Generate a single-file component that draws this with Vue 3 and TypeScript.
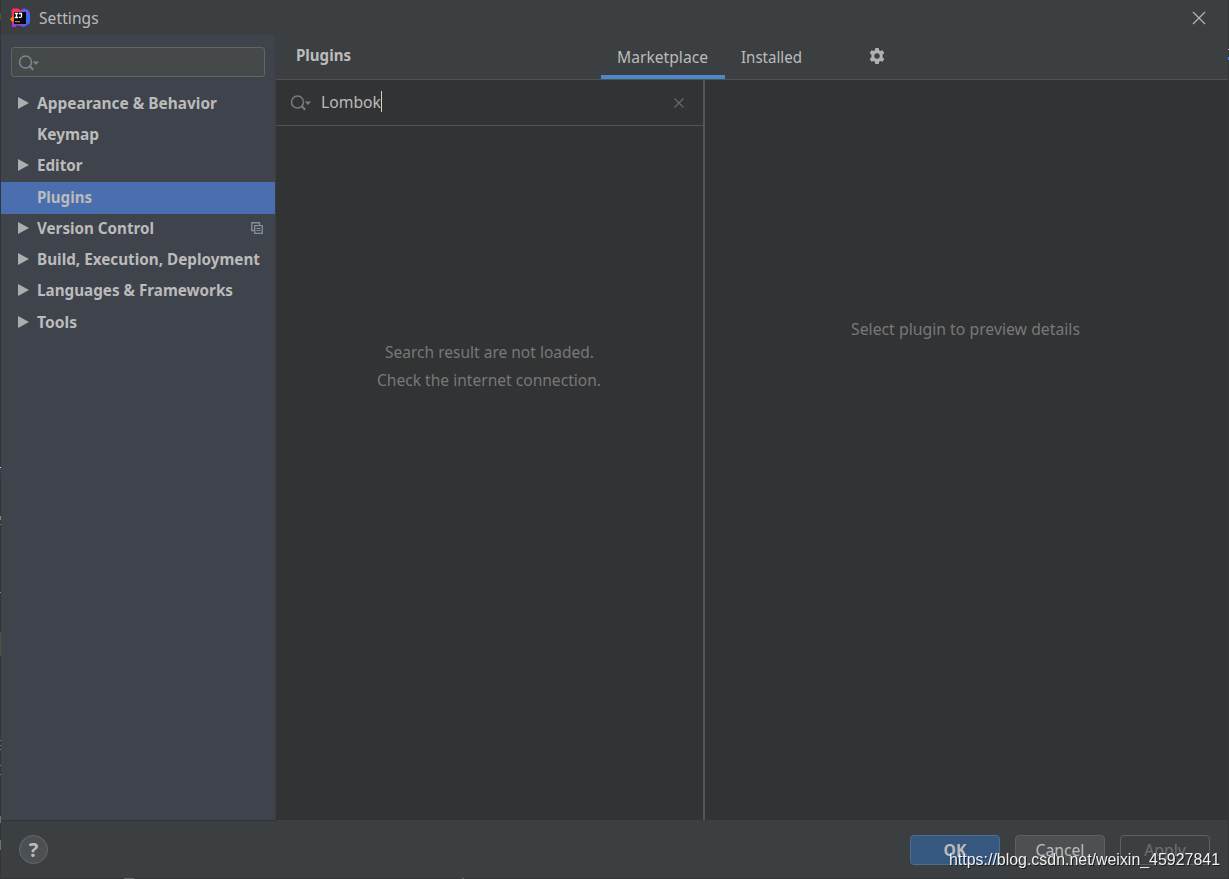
<script setup lang="ts">
interface Category {
  label: string
  expandable: boolean
  width: number
  selected?: boolean
  project?: boolean
}

const categories: Category[] = [
  { label: 'Appearance & Behavior', expandable: true, width: 180 },
  { label: 'Keymap', expandable: false, width: 62 },
  { label: 'Editor', expandable: true, width: 45.5 },
  { label: 'Plugins', expandable: false, width: 55, selected: true },
  { label: 'Version Control', expandable: true, width: 117, project: true },
  { label: 'Build, Execution, Deployment', expandable: true, width: 223 },
  { label: 'Languages & Frameworks', expandable: true, width: 196 },
  { label: 'Tools', expandable: true, width: 40 },
]
</script>

<template>
  <div class="window">
    <header class="titlebar">
      <svg class="logo" width="20" height="20" viewBox="0 0 20 20">
        <path d="M1.500 2 3 .5H8L12 3v8H2z" fill="#fe315d" />
        <path d="M0 11 3 8 6 13 2.500 14.500Z" fill="#f97a12" />
        <path d="M11 2.500 14 .5 18 2 20 5v10l-6 4-7-2z" fill="#3b6cf0" />
        <path d="M11 2.500 14 .5 18 2 19.500 6 10 8z" fill="#6b57e8" />
        <path d="M2 14 7 12 14 17 10 18 7 17 5.500 19H2z" fill="#a938c4" />
        <rect x="4" y="4" width="12" height="12" fill="#080609" />
        <path d="M4.800 5.500h3.400M6.500 5.500v4M4.800 9.500h3.400M9 5.500h2.500v2.800c0 .9-.8 1.200-2.500 1.100" fill="none" stroke="#fff" stroke-width="1.300" />
        <path d="M5 13.700h5" stroke="#a5a5a5" />
      </svg>
      <span class="title">Settings</span>
      <svg class="close" width="14" height="14" viewBox="0 0 14 14">
        <path d="M1 1 13 13M13 1 1 13" stroke="#b4b6b7" stroke-width="1.2" />
      </svg>
    </header>

    <main class="body">
      <aside class="sidebar">
        <div class="filter">
          <svg width="22" height="18" viewBox="0 0 22 18">
            <circle cx="7.5" cy="7" r="6" fill="none" stroke="#7d868d" stroke-width="1.5" />
            <path d="m11.500 11 3.700 3.700" stroke="#7d868d" stroke-width="2" />
            <path d="M14.700 6.500h6.300l-3.150 3.500z" fill="#7d868d" />
          </svg>
        </div>
        <nav class="tree">
          <div v-for="c in categories" :key="c.label" class="row" :class="{ selected: c.selected }">
            <svg class="arrow" width="12" height="12" viewBox="0 0 12 12">
              <path v-if="c.expandable" d="M1 0 12 6 1 12z" fill="#adadad" />
            </svg>
            <svg class="label" :width="c.width" height="28">
              <text x="0" y="19" :textLength="c.width" lengthAdjust="spacingAndGlyphs">{{ c.label }}</text>
            </svg>
            <svg v-if="c.project" class="project" width="12" height="12" viewBox="0 0 12 12">
              <path d="M3 8.500H.75V.75H8.500V3" fill="none" stroke="#84919a" stroke-width="1.300" />
              <path d="M3.700 3.700h7.600v7.600H3.700z" fill="none" stroke="#84919a" stroke-width="1.300" />
              <path d="M5.500 6.500h4M5.500 8.500h4" stroke="#84919a" />
            </svg>
          </div>
        </nav>
      </aside>

      <section class="content">
        <div class="tabs">
          <h1><svg width="56" height="28"><text x="0" y="20" textLength="55" lengthAdjust="spacingAndGlyphs">Plugins</text></svg></h1>
          <div class="tab active"><svg width="92" height="28"><text x="0" y="20" textLength="91" lengthAdjust="spacingAndGlyphs">Marketplace</text></svg></div>
          <div class="tab"><svg width="62" height="28"><text x="0" y="20" textLength="61" lengthAdjust="spacingAndGlyphs">Installed</text></svg></div>
          <svg class="gear" width="16" height="16" viewBox="0 0 16 16">
            <path
              fill="#afb1b3"
              fill-rule="evenodd"
              d="M6.3 0h3.4l.4 2.2 1.4.8 2.1-.8 1.7 3-1.7 1.4v2.8l1.7 1.4-1.7 3-2.1-.8-1.4.8-.4 2.2H6.3l-.4-2.2-1.4-.8-2.1.8-1.7-3 1.7-1.4V6.600L.7 5.200l1.700-3 2.100.8 1.400-.8zM8 5.300a2.700 2.700 0 1 0 0 5.400 2.700 2.700 0 0 0 0-5.400z"
            />
          </svg>
        </div>
        <div class="panes">
          <div class="results">
            <div class="search">
              <svg class="lens" width="22" height="18" viewBox="0 0 22 18">
                <circle cx="7.5" cy="7" r="6" fill="none" stroke="#747e85" stroke-width="1.5" />
                <path d="m11.500 11 3.700 3.700" stroke="#747e85" stroke-width="2" />
                <path d="M14.700 6.500h6.300l-3.150 3.500z" fill="#747e85" />
              </svg>
              <svg class="query" width="60" height="28"><text x="0" y="19" textLength="60" lengthAdjust="spacingAndGlyphs">Lombok</text></svg>
              <span class="caret"></span>
              <svg class="clear" width="10" height="10" viewBox="0 0 10 10">
                <path d="M.5.500 9.500 9.500M9.500.500.500 9.500" stroke="#696c6e" stroke-width="1.1" />
              </svg>
            </div>
            <div class="message">
              <svg width="209" height="28"><text x="0" y="20" textLength="209" lengthAdjust="spacingAndGlyphs">Search result are not loaded.</text></svg>
              <svg width="225" height="28"><text x="0" y="20" textLength="224" lengthAdjust="spacingAndGlyphs">Check the internet connection.</text></svg>
            </div>
          </div>
          <div class="details">
            <svg width="229" height="28"><text x="0" y="20" textLength="229" lengthAdjust="spacingAndGlyphs">Select plugin to preview details</text></svg>
          </div>
        </div>
      </section>
    </main>

    <footer class="footer">
      <button class="help">?</button>
      <button class="btn primary">OK</button>
      <button class="btn">Cancel</button>
      <button class="btn disabled">Apply</button>
    </footer>
    <svg class="edge" width="1229" height="879">
      <path d="M.5 13v7M.5 632v24" stroke="#54523f" />
      <path d="M.5 467v1" stroke="#c8c8d8" />
      <path d="M.5 468v5" stroke="#3a3678" />
      <path d="M.5 516v4M.5 592v1" stroke="#9a8455" />
      <path d="M.5 524v1M.5 740v1M.5 745v1M.5 749v1M.5 765v1M.5 774v1" stroke="#777b80" />
      <path d="M.5 816v7M.5 840v10" stroke="#6a7565" />
      <path d="M1228.500 49v1" stroke="#d0d0d0" />
      <path d="M1228.500 57v3" stroke="#4a88c7" />
      <path d="M124 878.500h10M462 878.500h2" stroke="#66696b" />
    </svg>
    <svg class="watermark" width="274" height="24">
      <text x="1" y="17" textLength="271" lengthAdjust="spacingAndGlyphs">https://blog.csdn.net/weixin_45927841</text>
    </svg>
  </div>
</template>

<style>
body {
  margin: 0;
  background: #3c3f41;
  overflow: hidden;
}
</style>

<style scoped>
.window {
  position: relative;
  box-sizing: border-box;
  width: 1229px;
  height: 879px;
  display: flex;
  flex-direction: column;
  background: #3c3f41;
  border: 1px solid #333638;
  border-top: 0;
  font: 15.7px/28px 'Noto Sans', 'Open Sans', sans-serif;
  color: #bbb;
}
svg {
  display: block;
  flex: none;
  overflow: visible;
}
svg text {
  fill: currentColor;
}
.titlebar {
  height: 35px;
  flex: none;
  display: flex;
  align-items: center;
  padding: 0 22px 0 9px;
}
.title {
  margin-left: 9px;
  font-size: 15.5px;
  letter-spacing: 0.1px;
}
.close {
  margin: 1px 0 0 auto;
}
.body {
  height: 786px;
  flex: none;
  display: flex;
}
.sidebar {
  box-sizing: border-box;
  width: 275px;
  background: #3f434c;
  border-right: 1px solid #393c41;
  border-bottom: 1px solid #323232;
}
.filter {
  box-sizing: border-box;
  height: 30px;
  margin: 12px 10px 0;
  padding: 7px 0 0 6px;
  background: #45494a;
  border: 1px solid #646464;
  border-radius: 3px;
}
.tree {
  margin-top: 12px;
  font-size: 15.4px;
  font-weight: 700;
}
.row {
  box-sizing: border-box;
  height: 31px;
  padding-top: 1px;
  display: flex;
  align-items: flex-start;
}
.row.selected {
  height: 32px;
  padding-top: 2px;
  background: #4b6eaf;
}
.row:last-child {
  padding-top: 2px;
}
.arrow {
  margin: 7px 8px 0 16px;
}
.project {
  margin: 7px 12px 0 auto;
}
.content {
  flex: 1;
  display: flex;
  flex-direction: column;
}
.tabs {
  box-sizing: border-box;
  height: 45px;
  flex: none;
  display: flex;
  border-bottom: 1px solid #515151;
}
h1 {
  margin: 6px 249px 0 20px;
  width: 56px;
  font-size: 15.4px;
}
.tab {
  box-sizing: border-box;
  height: 44px;
  padding: 8px 16px 0;
}
.tab.active {
  width: 124px;
  border-bottom: 4px solid #4a88c7;
}
.gear {
  margin: 13px 0 0 50px;
}
.panes {
  flex: 1;
  display: flex;
  padding-bottom: 1px;
}
.results {
  box-sizing: border-box;
  width: 429px;
  border-right: 2px solid #555;
  background: #313335;
}
.search {
  box-sizing: border-box;
  height: 46px;
  display: flex;
  align-items: center;
  padding: 0 19px 0 14px;
  border-bottom: 1px solid #515151;
}
.lens {
  margin-top: 2px;
}
.query {
  margin-left: 9px;
}
.caret {
  width: 1px;
  height: 21px;
  margin-top: -2px;
  background: #d0d0d0;
}
.clear {
  margin: 1px 0 0 auto;
}
.message {
  display: flex;
  flex-direction: column;
  align-items: center;
  padding-top: 212px;
  color: #787878;
}
.details {
  flex: 1;
  display: flex;
  justify-content: center;
  padding: 235px 2px 0 0;
  background: #313335;
  color: #787878;
}
.footer {
  flex: 1;
  display: flex;
  align-items: flex-start;
  padding: 14px 18px 0;
}
button {
  box-sizing: border-box;
  font: inherit;
  color: inherit;
  padding: 0;
}
.help {
  width: 29px;
  height: 29px;
  margin-right: auto;
  border: 1px solid #66696b;
  border-radius: 50%;
  background: #4c5052;
  font: 700 20px/28px 'Noto Sans', sans-serif;
}
.btn {
  width: 90px;
  height: 30px;
  margin-left: 15px;
  border: 1px solid #5e6060;
  border-radius: 4px;
  background: #4c5052;
  line-height: 29px;
}
.primary {
  background: #365880;
  border-color: #4c708c;
  font-weight: 700;
}
.disabled {
  background: transparent;
  color: #6f7173;
}
.edge {
  position: absolute;
  left: -1px;
  top: 0;
  pointer-events: none;
}
.watermark {
  position: absolute;
  left: 947px;
  top: 848px;
  font-family: 'Liberation Sans', sans-serif;
  font-size: 16px;
  color: #f0f0f0;
  filter: drop-shadow(1px 1px 0 rgba(0, 0, 0, 0.6));
}
</style>
